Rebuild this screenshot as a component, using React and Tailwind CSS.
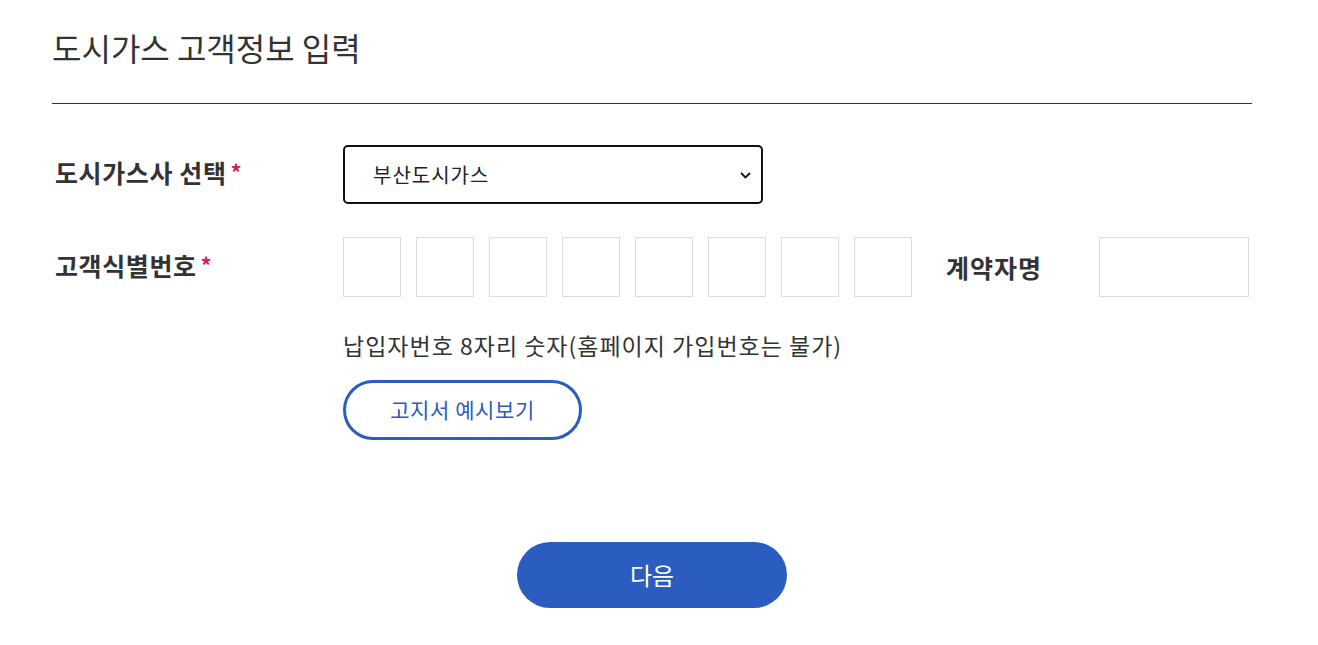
import React from "react";

const font = { fontFamily: '"Noto Sans CJK KR", "Noto Sans", sans-serif' };

export default function App() {
  const boxes = [0, 1, 2, 3, 4, 5, 6, 7];
  return (
    <div className="w-[1318px] h-[645px] bg-white text-[#333]" style={font}>
      <div className="ml-[52px] w-[1200px]">
        <div className="h-[104px] border-b border-[#333] pt-[24px]">
          <h1 className="text-[32px] leading-[46px] font-normal text-[#333]">
            도시가스 고객정보 입력
          </h1>
        </div>

        <div className="mt-[41px] flex items-center">
          <div className="w-[291px] pl-[3px] pb-[5px] text-[25px] font-semibold text-[#333] tracking-[0.6px] leading-none">
            도시가스사 선택<span className="ml-[4px] text-[#d81b60] text-[22px] align-top">*</span>
          </div>
          <div className="relative w-[420px] h-[59px] border-2 border-[#111] rounded-[5px] flex items-center pl-[28px]">
            <span className="text-[20px] text-[#222] tracking-[1px]">부산도시가스</span>
            <svg className="absolute right-[10px] top-[25px]" width="11" height="7" viewBox="0 0 11 7">
              <polyline points="1,1 5.5,5.5 10,1" fill="none" stroke="#111" strokeWidth="1.8" />
            </svg>
          </div>
        </div>

        <div className="mt-[33px] flex items-center">
          <div className="w-[291px] pl-[3px] pb-[3px] text-[25px] font-semibold text-[#333] tracking-[0.6px] leading-none">
            고객식별번호<span className="ml-[4px] text-[#d81b60] text-[22px] align-top">*</span>
          </div>
          <div className="flex gap-[15px]">
            {boxes.map((b) => (
              <div key={b} className="w-[58px] h-[60px] border border-[#ddd] bg-white" />
            ))}
          </div>
          <div className="ml-[34px] w-[153px] text-[25px] font-semibold text-[#333] tracking-[1px] leading-none">
            계약자명
          </div>
          <div className="w-[150px] h-[60px] border border-[#ddd] bg-white" />
        </div>

        <div className="ml-[291px] mt-[32px] text-[23px] leading-[32px] text-[#333] tracking-[1px]">
          납입자번호 8자리 숫자(홈페이지 가입번호는 불가)
        </div>

        <div className="ml-[291px] mt-[19px]">
          <button className="w-[239px] h-[60px] rounded-full border-[3px] border-[#2b5cbf] bg-white text-[#2b5cbf] text-[21px] tracking-[0.6px] flex items-center justify-center">
            고지서 예시보기
          </button>
        </div>

        <div className="mt-[102px] flex justify-center">
          <button className="w-[270px] h-[66px] rounded-full bg-[#2b5cbf] text-white text-[24px] flex items-center justify-center">
            다음
          </button>
        </div>
      </div>
    </div>
  );
}
